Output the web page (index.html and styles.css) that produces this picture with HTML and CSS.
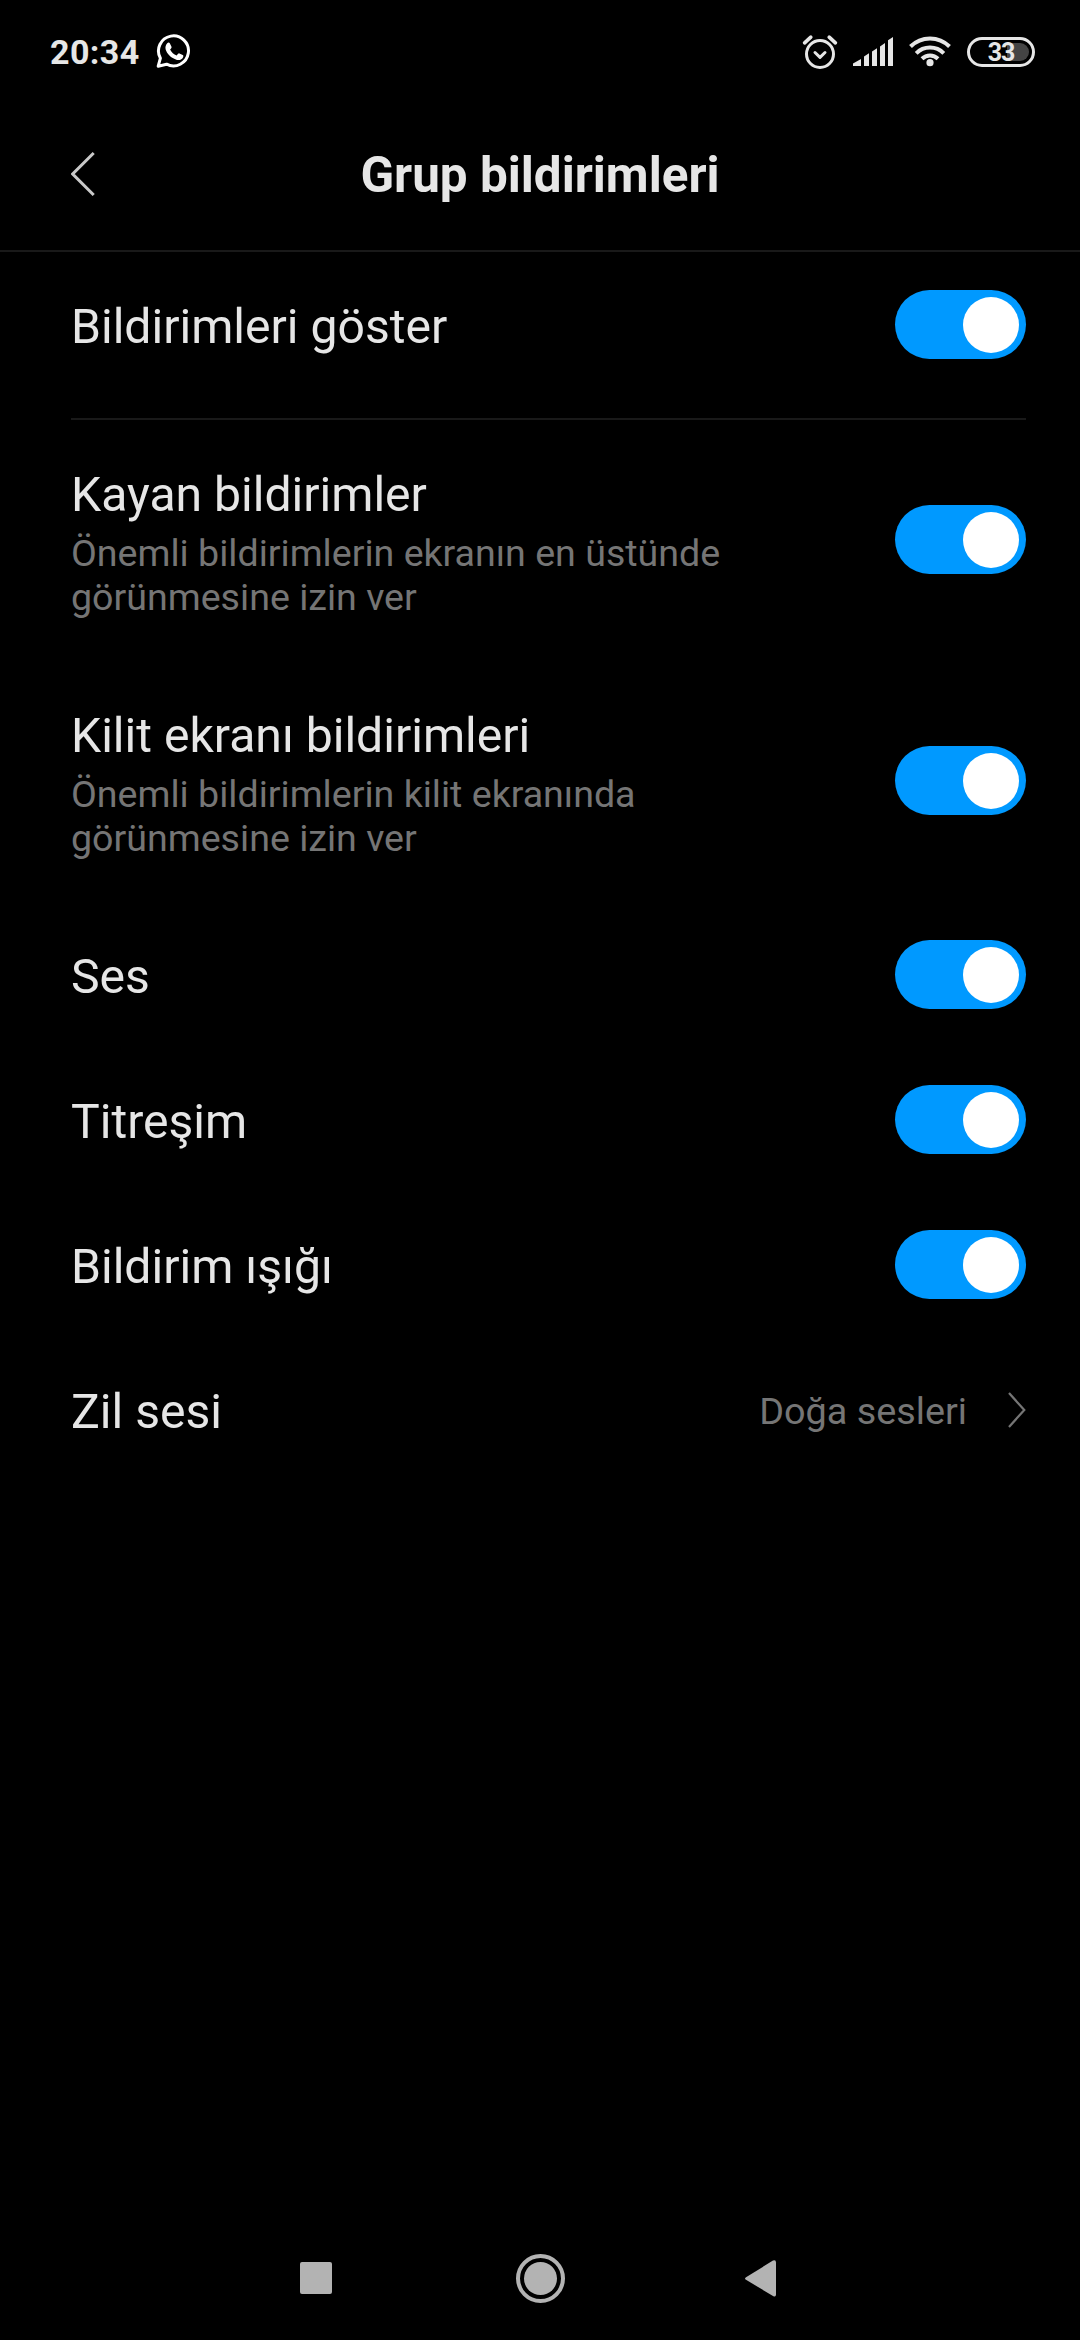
FILE: index.html
```html
<!DOCTYPE html>
<html lang="tr">
<head>
<meta charset="utf-8">
<title>Grup bildirimleri</title>
<link rel="stylesheet" href="styles.css">
</head>
<body>
<div class="screen">
  <div class="status">
    <span class="clock">20:34</span>
    <svg class="wa" width="36" height="36" viewBox="0 0 36 36">
      <path d="M4.4 25.2A15 15 0 1 1 10.6 31.2L2.2 33.2Z" fill="none" stroke="#fff" stroke-width="3" stroke-linejoin="round"/>
      <path d="M11.2 10.2c.9-.9 2.100-.9 2.600 0l1.700 3.500c.3.800-.1 1.400-1.400 2.800 1.500 2.900 3.600 4.800 6.600 6 1.300-1.700 1.900-2.400 2.700-2.100l3.300 1.700c.8.400.8 1.200.4 2.200-1 2.300-3.600 3.300-6.100 2.600-6-1.700-10.300-6.300-11.400-10.600-.5-2.300.2-4.700 1.600-6.100Z" fill="#fff"/>
    </svg>
    <div class="status-right">
      <svg width="36" height="36" viewBox="0 0 36 36" fill="none" stroke="#e6e6e6" stroke-width="3" stroke-linecap="round" stroke-linejoin="round">
        <circle cx="18" cy="20" r="13.500"/>
        <path d="M13 18.500l5 4.800 5-4.800"/>
        <path d="M2.600 8.800L8.800 3.200M33.400 8.800L27.200 3.200" stroke-width="3.600"/>
      </svg>
      <svg class="signal" width="41" height="30" viewBox="0 0 41 30" fill="#e6e6e6">
        <path d="M0 29V26.600L8 22V29ZM11 29V19.500L16 16.200V29ZM19 29V14.600L24 11.300V29ZM27 29V9.400L32 6V29ZM35 29V3.200L40 0V29Z"/>
      </svg>
      <svg class="wifi" width="42" height="31" viewBox="0 0 42 31" fill="none" stroke="#e6e6e6" stroke-width="4">
        <path d="M1.500 10.500A27.500 27.500 0 0 1 40.500 10.500M7.200 17.300A19.500 19.500 0 0 1 34.800 17.300M13 22.800A11.500 11.500 0 0 1 29 22.800"/>
        <circle cx="21" cy="26.700" r="3.600" fill="#e6e6e6" stroke="none"/>
      </svg>
      <div class="battery"><span>33</span></div>
    </div>
  </div>

  <header class="header">
    <svg class="back" width="26" height="46" viewBox="0 0 26 46"><path d="M22.700 2L1.700 23L22.700 44" fill="none" stroke="#c9c9c9" stroke-width="3"/></svg>
    <h1>Grup bildirimleri</h1>
  </header>

  <main class="list">
    <section class="group">
      <div class="row"><div class="label">Bildirimleri göster</div><div class="switch"></div></div>
    </section>
    <div class="row tall">
      <div class="texts"><div class="label">Kayan bildirimler</div><p>Önemli bildirimlerin ekranın en üstünde görünmesine izin ver</p></div>
      <div class="switch"></div>
    </div>
    <div class="row tall">
      <div class="texts"><div class="label">Kilit ekranı bildirimleri</div><p>Önemli bildirimlerin kilit ekranında görünmesine izin ver</p></div>
      <div class="switch"></div>
    </div>
    <div class="row"><div class="label">Ses</div><div class="switch"></div></div>
    <div class="row"><div class="label">Titreşim</div><div class="switch"></div></div>
    <div class="row"><div class="label">Bildirim ışığı</div><div class="switch"></div></div>
    <div class="row">
      <div class="label">Zil sesi</div>
      <div class="value">Doğa sesleri</div>
      <svg class="more" width="18" height="36" viewBox="0 0 18 36"><path d="M1 1L16.300 18L1 35" fill="none" stroke="#757575" stroke-width="2.200"/></svg>
    </div>
  </main>

  <nav class="nav">
    <svg width="648" height="52" viewBox="0 0 648 52" fill="#b3b3b3">
      <rect x="84" y="9" width="32" height="32" rx="2"/>
      <circle cx="324.500" cy="25.500" r="16.500"/>
      <circle cx="324.500" cy="25.500" r="22.500" fill="none" stroke="#b3b3b3" stroke-width="4"/>
      <path d="M530 24.200L557 7.600Q560 6.500 560 9.500V41.500Q560 44.500 557 43L530 26.800Q528 25.500 530 24.200Z"/>
    </svg>
  </nav>
</div>
</body>
</html>
```

FILE: styles.css
```css
* { box-sizing: border-box; margin: 0; padding: 0; }
body { background: #000; }
svg { display: block; flex: none; }

.screen {
  width: 1080px;
  height: 2340px;
  display: flex;
  flex-direction: column;
  background: #000;
  color: #e6e6e6;
  font-family: Roboto, "Noto Sans", sans-serif;
}

.status {
  height: 103px;
  padding: 0 45px 0 50px;
  display: flex;
  align-items: center;
}
.clock { font-size: 34px; font-weight: 700; line-height: 40px; letter-spacing: 0.4px; }
.wa { margin-left: 16px; margin-top: -1px; }
.status-right { margin-left: auto; display: flex; align-items: center; }
.signal { margin-left: 15px; }
.wifi { margin-left: 15px; }
.battery {
  width: 68px;
  height: 30px;
  margin-left: 16px;
  border: 3px solid #e6e6e6;
  border-radius: 15px;
  padding: 3px;
  font-size: 25px;
  font-weight: 700;
  line-height: 20px;
  letter-spacing: -1px;
  text-align: center;
}
.battery span {
  display: block;
  height: 18px;
  border-radius: 9px;
  background: linear-gradient(90deg, #000 60%, #444 60%);
}

.header {
  height: 149px;
  padding: 0 71px;
  display: grid;
  grid-template-columns: 26px 1fr 26px;
  align-items: center;
  border-bottom: 2px solid #191919;
}
.back { margin-top: -6px; }
.header h1 { font-size: 49.4px; font-weight: 700; line-height: 58px; text-align: center; margin-top: -4px; white-space: nowrap; }

.list { padding: 0 54px 0 71px; flex: 1; }
.group { height: 168px; border-bottom: 2px solid #191919; }
.row { height: 145px; display: flex; align-items: center; }
.row.tall { height: 241px; }
.label { font-size: 48.1px; line-height: 56px; }
.row > .label { margin-top: 4px; }
.texts { width: 700px; margin-top: 4px; }
.texts p { margin-top: 8px; font-size: 37.6px; line-height: 44px; color: #757575; }

.switch {
  width: 131px;
  height: 69px;
  margin-left: auto;
  padding: 7px;
  border-radius: 35px;
  background: #0099ff;
  display: flex;
  justify-content: flex-end;
}
.tall .switch { margin-top: -2px; }
.switch::before { content: ""; width: 56px; height: 56px; border-radius: 50%; background: #fff; }

.value { margin: 3px 0 0 auto; font-size: 37.8px; line-height: 44px; color: #757575; }
.more { margin-left: 41px; }

.nav { height: 88px; padding-top: 1px; display: flex; justify-content: center; }
```
